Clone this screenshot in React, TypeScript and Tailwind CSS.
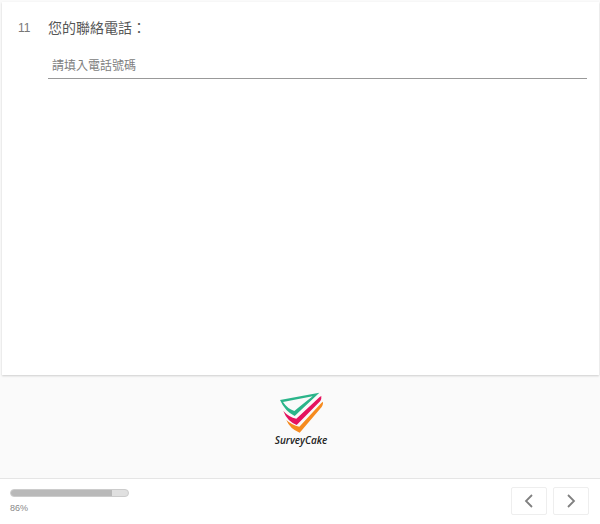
import { useState } from "react";

const PROGRESS = 86;

function Logo() {
  return (
    <svg viewBox="0 0 132 126" className="h-[42px] w-11" aria-hidden="true">
      <path
        fill="#2bb58a"
        fillRule="evenodd"
        d="M3 24 L121 2 L47 72 Q18 58 3 24 Z M12 30 Q25 50 46 57 Q62 44 101 13 Z"
      />
      <path
        fill="#e5135f"
        d="M13 57 Q30 76 52 80 L122 15 L127 12 Q128 21 124 27 L53 99 Q24 87 13 57 Z"
      />
      <path
        fill="#f68b1f"
        d="M22 84 Q39 100 61 104 L127 33 L132 29 Q133 38 128 45 L62 122 Q33 111 22 84 Z"
      />
    </svg>
  );
}

function Chevron({ d }: { d: string }) {
  return (
    <svg
      viewBox="0 0 10 14"
      className="h-3.5 w-2.5"
      fill="none"
      stroke="#808080"
      strokeWidth="1.8"
      aria-hidden="true"
    >
      <path d={d} />
    </svg>
  );
}

export default function App() {
  const [phone, setPhone] = useState("");

  return (
    <div className="flex min-h-svh flex-col bg-[#fafafa] font-['Liberation_Sans','Noto_Sans_CJK_TC',sans-serif] text-[#777777]">
      <main className="mt-0.5 mr-px ml-0.5 flex min-h-[373px] gap-4 bg-white pt-4 pr-3 pl-4 shadow-[0_1px_2px_rgba(0,0,0,0.18)]">
        <span className="w-[14px] text-xs leading-5">11</span>
        <div className="flex-1">
          <label htmlFor="phone" className="block text-sm leading-5 text-[#555555]">
            您的聯絡電話：
          </label>
          <input
            id="phone"
            type="tel"
            value={phone}
            onChange={(e) => setPhone(e.target.value)}
            placeholder="請填入電話號碼"
            className="mt-4 h-[25px] w-full border-b border-[#999999] px-1 text-xs outline-none placeholder:text-[#808080]"
          />
        </div>
      </main>

      <div className="flex flex-1 flex-col items-center pt-[17px] pl-0.5">
        <Logo />
        <span className="font-['Open_Sans',sans-serif] text-[10px] leading-3 font-semibold text-[#222222] italic">
          SurveyCake
        </span>
      </div>

      <footer className="flex h-[46px] justify-between border-t border-[#e5e5e5] bg-white pr-[11px] pl-2.5">
        <div className="w-[119px] pt-2.5">
          <div
            role="progressbar"
            aria-label="填答進度"
            aria-valuenow={PROGRESS}
            aria-valuemin={0}
            aria-valuemax={100}
            className="h-2 overflow-hidden rounded-sm border border-[#cccccc] bg-[#e0e0e0]"
          >
            <div className="h-full bg-[#b9b9b9]" style={{ width: `${PROGRESS}%` }} />
          </div>
          <span className="mt-1 block text-[9px] leading-3.5 text-[#888888]">{PROGRESS}%</span>
        </div>
        <div className="flex gap-1.5 pt-2">
          <button
            type="button"
            aria-label="上一題"
            className="flex h-7 w-9 items-center justify-center rounded-xs border border-[#eeeeee] bg-white"
          >
            <Chevron d="M8 1 L2 7 L8 13" />
          </button>
          <button
            type="button"
            aria-label="下一題"
            className="flex h-7 w-9 items-center justify-center rounded-xs border border-[#eeeeee] bg-white"
          >
            <Chevron d="M2 1 L8 7 L2 13" />
          </button>
        </div>
      </footer>
    </div>
  );
}
